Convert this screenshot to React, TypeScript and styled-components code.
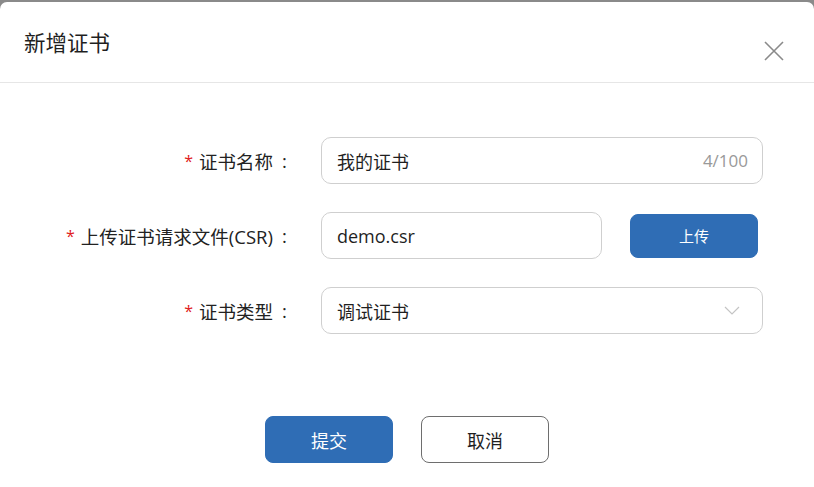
import React from "react";
import styled, { createGlobalStyle } from "styled-components";

const GlobalStyle = createGlobalStyle`
  html, body {
    margin: 0;
    padding: 0;
    background: #8a8a8a;
    height: 100%;
  }
  body {
    font-family: "Noto Sans CJK SC", "Open Sans", sans-serif;
  }
`;

const StyledModal = styled.div`
  margin-top: 2px;
  width: 814px;
  height: 485px;
  background: #ffffff;
  border-radius: 7px 7px 0 0;
  display: flex;
  flex-direction: column;
  overflow: hidden;
`;

const StyledHeader = styled.div`
  height: 81px;
  flex-shrink: 0;
  box-sizing: border-box;
  border-bottom: 1px solid #e6e6e6;
  display: flex;
  align-items: flex-start;
  justify-content: space-between;
  padding: 25px 28px 0 24px;
`;

const StyledTitle = styled.h2`
  margin: 0;
  font-size: 21.5px;
  line-height: 30px;
  font-weight: 400;
  color: #1f1f1f;
`;

const StyledClose = styled.button`
  background: transparent;
  border: none;
  padding: 0;
  margin-top: 12px;
  width: 24px;
  height: 24px;
  cursor: pointer;
  display: flex;
`;

const StyledForm = styled.div`
  display: grid;
  grid-template-columns: 290px 442px;
  column-gap: 31px;
  row-gap: 28px;
  padding: 54px 0 0 0;
  align-items: center;
`;

const StyledLabel = styled.label`
  display: flex;
  justify-content: flex-end;
  align-items: center;
  font-size: 18.5px;
  color: #222222;
  white-space: nowrap;
  font-family: "Open Sans", "Noto Sans CJK SC", sans-serif;
`;

const StyledStar = styled.span`
  color: #e02020;
  margin-right: 6px;
  font-size: 16px;
`;

const StyledColon = styled.span`
  margin-left: 9px;
  width: 8px;
`;

const StyledField = styled.div<{ $width?: number }>`
  width: ${(p) => (p.$width ? `${p.$width}px` : "100%")};
  height: 47px;
  box-sizing: border-box;
  border: 1px solid #cfcfcf;
  border-radius: 10px;
  display: flex;
  align-items: center;
  justify-content: space-between;
  padding: 0 14px 0 15px;
  font-size: 18px;
  color: #1f1f1f;
  font-family: "Open Sans", "Noto Sans CJK SC", sans-serif;
`;

const StyledCount = styled.span`
  color: #999999;
  font-size: 17px;
`;

const StyledRow = styled.div`
  display: flex;
  align-items: center;
  gap: 28px;
`;

const StyledButton = styled.button<{ $primary?: boolean; $height?: number }>`
  width: 128px;
  height: ${(p) => p.$height ?? 47}px;
  box-sizing: border-box;
  border-radius: 8px;
  border: 1px solid ${(p) => (p.$primary ? "#2f6db5" : "#6e6e6e")};
  background: ${(p) => (p.$primary ? "#2f6db5" : "#ffffff")};
  color: ${(p) => (p.$primary ? "#ffffff" : "#1f1f1f")};
  font-family: "Noto Sans CJK SC", sans-serif;
  font-size: ${(p) => (p.$height ? 15 : 18)}px;
  cursor: pointer;
  padding: 0;
`;

const StyledFooter = styled.div`
  display: flex;
  justify-content: center;
  gap: 28px;
  margin-top: 82px;
`;

const App: React.FC = () => {
  return (
    <>
      <GlobalStyle />
      <StyledModal>
        <StyledHeader>
          <StyledTitle>新增证书</StyledTitle>
          <StyledClose type="button" aria-label="close">
            <svg width="24" height="24" viewBox="0 0 24 24">
              <path d="M3 3 L21 21 M21 3 L3 21" stroke="#8a8a8a" strokeWidth="1.6" fill="none" />
            </svg>
          </StyledClose>
        </StyledHeader>
        <StyledForm>
          <StyledLabel>
            <StyledStar>*</StyledStar>证书名称<StyledColon>:</StyledColon>
          </StyledLabel>
          <StyledField>
            <span>我的证书</span>
            <StyledCount>4/100</StyledCount>
          </StyledField>

          <StyledLabel>
            <StyledStar>*</StyledStar>上传证书请求文件(CSR)<StyledColon>:</StyledColon>
          </StyledLabel>
          <StyledRow>
            <StyledField $width={281}>
              <span>demo.csr</span>
            </StyledField>
            <StyledButton type="button" $primary $height={44}>
              上传
            </StyledButton>
          </StyledRow>

          <StyledLabel>
            <StyledStar>*</StyledStar>证书类型<StyledColon>:</StyledColon>
          </StyledLabel>
          <StyledField>
            <span>调试证书</span>
            <svg width="16" height="10" viewBox="0 0 16 10" style={{ marginRight: 8 }}>
              <path d="M1 1 L8 8 L15 1" stroke="#c4c4c4" strokeWidth="1.2" fill="none" />
            </svg>
          </StyledField>
        </StyledForm>
        <StyledFooter>
          <StyledButton type="button" $primary>
            提交
          </StyledButton>
          <StyledButton type="button">取消</StyledButton>
        </StyledFooter>
      </StyledModal>
    </>
  );
};

export default App;
